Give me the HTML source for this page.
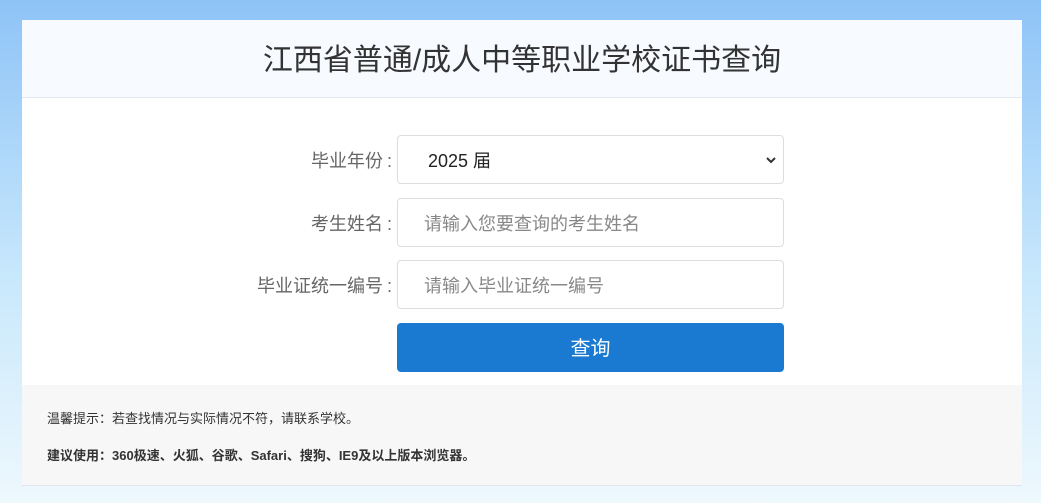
<!DOCTYPE html>
<html><head><meta charset="utf-8"><style>
*{margin:0;padding:0;box-sizing:border-box}
body{width:1041px;height:503px;overflow:hidden;background:linear-gradient(#8ec3f7,#c8e8fc 55%,#eef8fd);font-family:"Liberation Sans","Noto Sans CJK SC",sans-serif;position:relative}
.card{position:absolute;left:22px;top:20px;width:1000px;height:466px;background:#fff;border-bottom:1px solid #dfe6f2}
.hd{height:78px;background:#f7faff;border-bottom:1px solid #e3e9f3;text-align:center;font-size:30px;line-height:82px;color:#333}
.row{position:absolute;left:0;width:1000px;height:49px}
.lab{position:absolute;right:630px;top:2px;line-height:49px;font-size:18px;color:#666;white-space:nowrap}
.lab i{font-style:normal;padding-left:4px}
.inp{position:absolute;left:375px;top:0;width:387px;height:49px;border:1px solid #ddd;border-radius:4px;line-height:51px;padding-left:26px;font-size:18px;color:#888}
.btn{position:absolute;left:375px;top:303px;width:387px;height:49px;background:#1a7ad2;border-radius:4px;color:#fff;text-align:center;line-height:52px;font-size:20px}
.ft{position:absolute;left:0;top:365px;width:1000px;height:100px;background:#f7f7f7;font-size:13px;color:#333;padding-left:25px}
</style></head><body>
<div class="card">
<div class="hd">江西省普通/成人中等职业学校证书查询</div>
<div class="row" style="top:115px"><div class="lab">毕业年份<i>:</i></div><div class="inp" style="color:#222;padding-left:30px">2025 届<svg style="position:absolute;right:6px;top:19px" width="12" height="10" viewBox="0 0 12 10"><path d="M2 3l4 4 4-4" stroke="#333" stroke-width="2" fill="none"/></svg></div></div>
<div class="row" style="top:178px"><div class="lab">考生姓名<i>:</i></div><div class="inp">请输入您要查询的考生姓名</div></div>
<div class="row" style="top:240px"><div class="lab">毕业证统一编号<i>:</i></div><div class="inp">请输入毕业证统一编号</div></div>
<div class="btn">查询</div>
<div class="ft"><div style="position:absolute;top:23px">温馨提示：若查找情况与实际情况不符，请联系学校。</div><div style="position:absolute;top:60px;font-weight:bold">建议使用：360极速、火狐、谷歌、Safari、搜狗、IE9及以上版本浏览器。</div></div>
</div>
</body></html>
